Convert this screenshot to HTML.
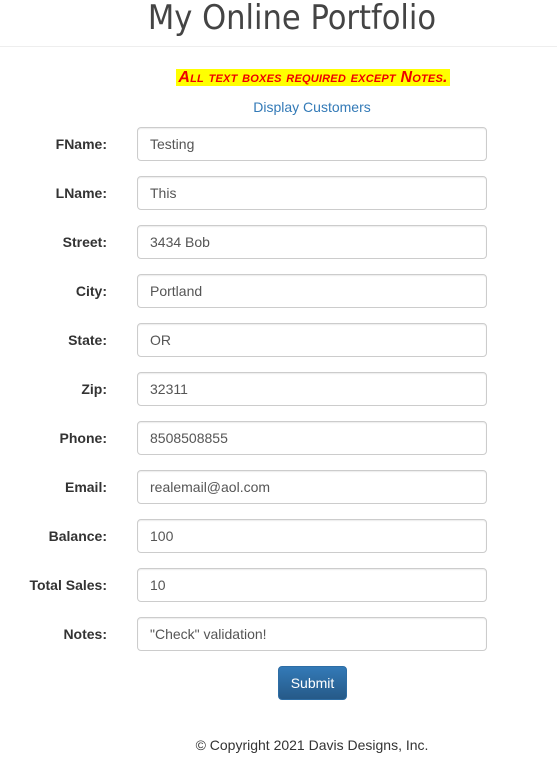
<!DOCTYPE html>
<html><head><style>
body{margin:0;width:557px;height:763px;background:#fff;font-family:"Liberation Sans",sans-serif;color:#333;position:relative;overflow:hidden}
.t{position:absolute;left:142px;width:300px;text-align:center;top:-2px;font-size:34px;font-family:"DejaVu Sans Condensed","DejaVu Sans",sans-serif;font-stretch:condensed;font-weight:normal;color:#444;white-space:nowrap}
.hr{position:absolute;left:0;right:0;top:46px;border-top:1px solid #eee}
.y{position:absolute;left:176px;top:69px;width:274px;height:17px;background:#ff0;color:#e00;font-style:italic;font-weight:bold;font-variant:small-caps;font-size:16px;line-height:17px;text-align:center;white-space:nowrap;letter-spacing:0.2px}
.d{position:absolute;left:0;width:624px;text-align:center;top:99px;font-size:14px;color:#337ab7}
.l{position:absolute;right:450px;font-weight:bold;font-size:14px;line-height:34px}
.i{position:absolute;left:137px;width:336px;height:32px;border:1px solid #ccc;border-radius:4px;padding-left:12px;font-size:14px;line-height:32px;color:#555;box-shadow:inset 0 1px 1px rgba(0,0,0,.075)}
.b{position:absolute;left:278px;top:666px;width:67px;height:32px;border:1px solid #2e6da4;border-radius:4px;background:linear-gradient(#337ab7,#265a88);color:#fff;font-size:14px;line-height:32px;text-align:center}
.c{position:absolute;left:0;width:624px;text-align:center;top:737px;font-size:14px;color:#333}
</style></head><body>
<div class="t">My Online Portfolio</div>
<div class="hr"></div>
<div class="y">All text boxes required except Notes.</div>
<div class="d">Display Customers</div>
<div class="l" style="top:127px">FName:</div><div class="i" style="top:127px">Testing</div>
<div class="l" style="top:176px">LName:</div><div class="i" style="top:176px">This</div>
<div class="l" style="top:225px">Street:</div><div class="i" style="top:225px">3434 Bob</div>
<div class="l" style="top:274px">City:</div><div class="i" style="top:274px">Portland</div>
<div class="l" style="top:323px">State:</div><div class="i" style="top:323px">OR</div>
<div class="l" style="top:372px">Zip:</div><div class="i" style="top:372px">32311</div>
<div class="l" style="top:421px">Phone:</div><div class="i" style="top:421px">8508508855</div>
<div class="l" style="top:470px">Email:</div><div class="i" style="top:470px">realemail@aol.com</div>
<div class="l" style="top:519px">Balance:</div><div class="i" style="top:519px">100</div>
<div class="l" style="top:568px">Total Sales:</div><div class="i" style="top:568px">10</div>
<div class="l" style="top:617px">Notes:</div><div class="i" style="top:617px">"Check" validation!</div>
<div class="b">Submit</div>
<div class="c">© Copyright 2021 Davis Designs, Inc.</div>
</body></html>
